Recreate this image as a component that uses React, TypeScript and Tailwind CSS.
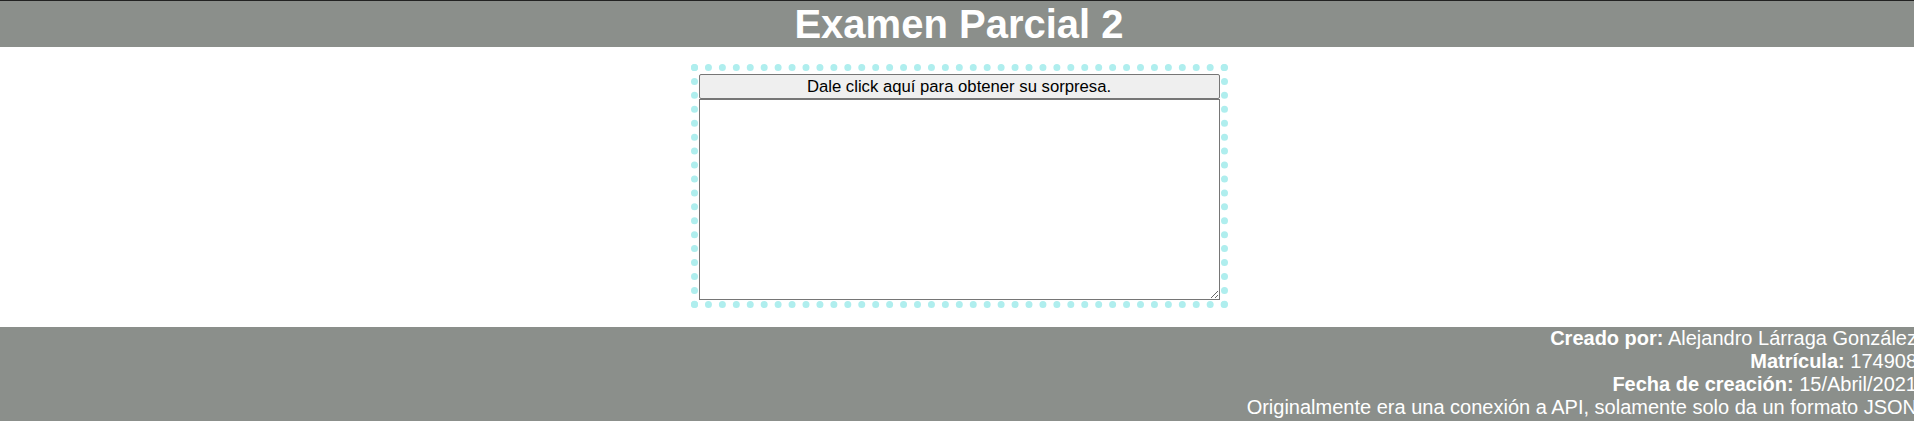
export default function App() {
  return (
    <div className="min-h-[421px] bg-white font-['Liberation_Sans',Arial,sans-serif]">
      <header className="border-t border-[#222222] bg-[#8b8f8b]">
        <h1 className="m-0 pl-[4px] text-center text-[40px] font-bold leading-[46px] text-white">
          Examen Parcial 2
        </h1>
      </header>

      <main className="flex justify-center pt-[17px] pb-[19px]">
        <div className="ml-[4px] flex w-[537px] flex-col border-[7px] border-dotted border-[#afeeee] px-px pt-[3px] pb-px">
          <button className="h-[25px] w-full rounded-[2px] border border-[#767676] bg-[#efefef] text-[16.7px] leading-[18px] text-black">
            Dale click aquí para obtener su sorpresa.
          </button>
          <textarea className="h-[201px] w-full resize border border-[#767676] bg-white" />
        </div>
      </main>

      <footer className="bg-[#8b8f8b] pb-[2px]">
        <div className="mr-[-3px] text-right text-[20px] leading-[23px] text-white">
          <p>
            <b>Creado por:</b> Alejandro Lárraga González
          </p>
          <p>
            <b>Matrícula:</b> 174908
          </p>
          <p>
            <b>Fecha de creación:</b> 15/Abril/2021
          </p>
          <p>Originalmente era una conexión a API, solamente solo da un formato JSON</p>
        </div>
      </footer>
    </div>
  );
}
